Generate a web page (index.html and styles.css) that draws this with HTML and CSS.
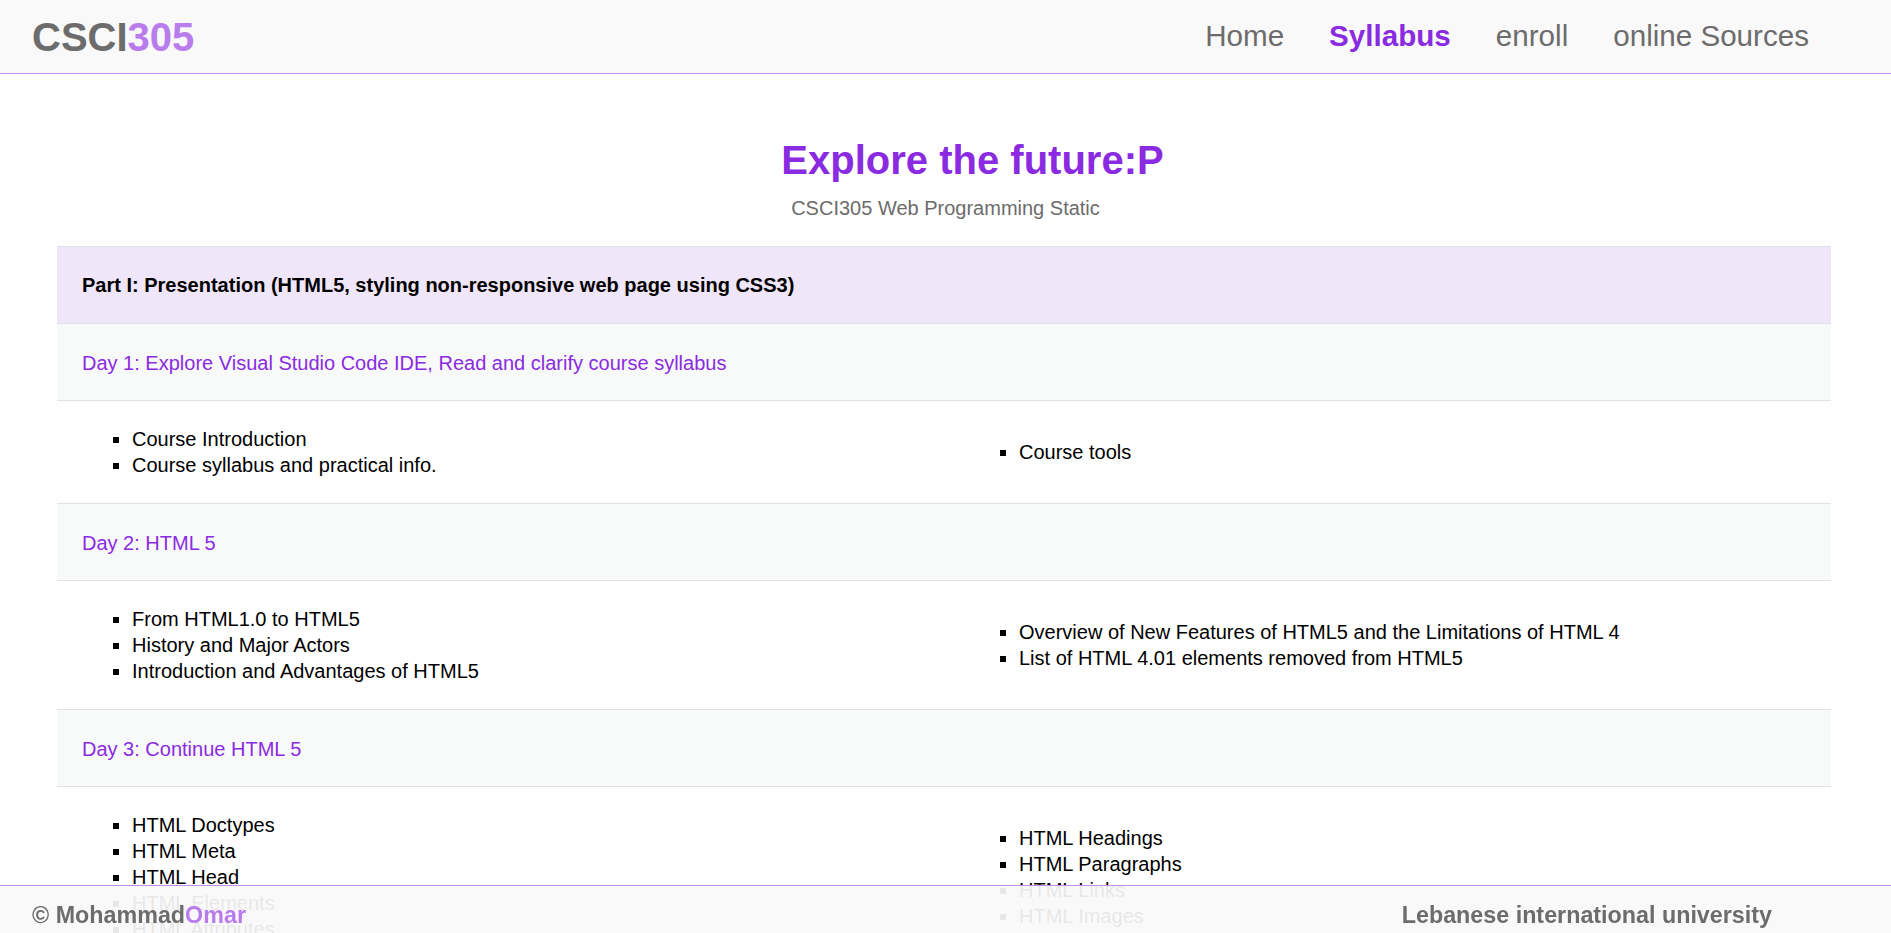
FILE: index.html
```html
<!DOCTYPE html>
<html lang="en">
<head>
<meta charset="utf-8">
<title>CSCI305 Syllabus</title>
<link rel="stylesheet" href="styles.css">
</head>
<body>
<header class="site-header">
  <a class="logo" href="#">CSCI<span class="logo-num">305</span></a>
  <nav class="main-nav">
    <a class="nav-link" href="#">Home</a>
    <a class="nav-link active" href="#">Syllabus</a>
    <a class="nav-link" href="#">enroll</a>
    <a class="nav-link" href="#">online Sources</a>
  </nav>
</header>

<main class="content">
  <h1 class="page-title">Explore the future:P</h1>
  <p class="page-subtitle">CSCI305 Web Programming Static</p>

  <table class="syllabus">
    <tr class="part-row"><th colspan="2">Part I: Presentation (HTML5, styling non-responsive web page using CSS3)</th></tr>

    <tr class="day-row"><td colspan="2">Day 1: Explore Visual Studio Code IDE, Read and clarify course syllabus</td></tr>
    <tr class="topic-row">
      <td><ul><li>Course Introduction</li><li>Course syllabus and practical info.</li></ul></td>
      <td><ul><li>Course tools</li></ul></td>
    </tr>

    <tr class="day-row"><td colspan="2">Day 2: HTML 5</td></tr>
    <tr class="topic-row">
      <td><ul><li>From HTML1.0 to HTML5</li><li>History and Major Actors</li><li>Introduction and Advantages of HTML5</li></ul></td>
      <td><ul><li>Overview of New Features of HTML5 and the Limitations of HTML 4</li><li>List of HTML 4.01 elements removed from HTML5</li></ul></td>
    </tr>

    <tr class="day-row"><td colspan="2">Day 3: Continue HTML 5</td></tr>
    <tr class="topic-row">
      <td><ul><li>HTML Doctypes</li><li>HTML Meta</li><li>HTML Head</li><li>HTML Elements</li><li>HTML Attributes</li></ul></td>
      <td><ul><li>HTML Headings</li><li>HTML Paragraphs</li><li>HTML Links</li><li>HTML Images</li></ul></td>
    </tr>
  </table>
</main>

<footer class="site-footer">
  <span class="copyright">© Mohammad<span class="accent">Omar</span></span>
  <span class="university">Lebanese international university</span>
</footer>
</body>
</html>
```
FILE: styles.css
```css
html {
  scrollbar-width: none;
}
html::-webkit-scrollbar {
  display: none;
}
body {
  margin: 0;
  font-family: "Liberation Sans", Arial, sans-serif;
  color: #000;
  background: #fff;
}
a {
  text-decoration: none;
}

.site-header {
  position: fixed;
  top: 0;
  left: 0;
  right: 0;
  height: 74px;
  box-sizing: border-box;
  display: flex;
  align-items: center;
  justify-content: space-between;
  padding: 0 82px 0 32px;
  background: #f9f9f9;
  border-bottom: 1px solid #c48ff0;
  z-index: 10;
}
.logo {
  font-size: 40px;
  font-weight: bold;
  line-height: 46px;
  color: #6c6c6c;
}
.logo-num {
  color: #b87ced;
}
.main-nav {
  display: flex;
  gap: 45px;
  margin-bottom: 2px;
}
.nav-link {
  font-size: 29.6px;
  line-height: 34px;
  color: #6c6c6c;
}
.nav-link.active {
  color: #8a2be2;
  font-weight: bold;
}

.content {
  padding: 74px 0 60px;
}
.page-title {
  margin: 63px 0 0;
  padding-left: 54px;
  text-align: center;
  font-size: 40px;
  line-height: 46px;
  font-weight: bold;
  color: #8a2be2;
}
.page-subtitle {
  margin: 14px 0 0;
  text-align: center;
  font-size: 20px;
  line-height: 23px;
  color: #6c6c6c;
}

.syllabus {
  width: calc(100% - 117px);
  margin: 26px 60px 0 57px;
  border-collapse: collapse;
  font-size: 20px;
  line-height: 23px;
}
.syllabus tr {
  border-top: 1px solid #dee2e6;
  border-bottom: 1px solid #dee2e6;
}
.part-row th {
  text-align: left;
  padding: 27px 25px 26px;
  background: #f0e6fa;
  font-weight: bold;
}
.day-row td {
  padding: 28px 25px 25px;
  background: #f8f9f9;
  color: #8a2be2;
}
.topic-row td {
  width: 50%;
  padding: 5px 35px;
  vertical-align: middle;
}
.topic-row ul {
  margin: 20px 0;
  padding-left: 40px;
  list-style: square;
}
.topic-row li {
  line-height: 26px;
}

.site-footer {
  position: fixed;
  left: 0;
  right: 0;
  bottom: 0;
  height: 48px;
  box-sizing: border-box;
  display: flex;
  align-items: center;
  justify-content: space-between;
  padding: 10px 119px 0 32px;
  background: rgba(249, 249, 249, 0.93);
  border-top: 1px solid #c48ff0;
  font-size: 23.3px;
  font-weight: bold;
  line-height: 26px;
  color: #6c6c6c;
}
.accent {
  color: #b87ced;
}
```
